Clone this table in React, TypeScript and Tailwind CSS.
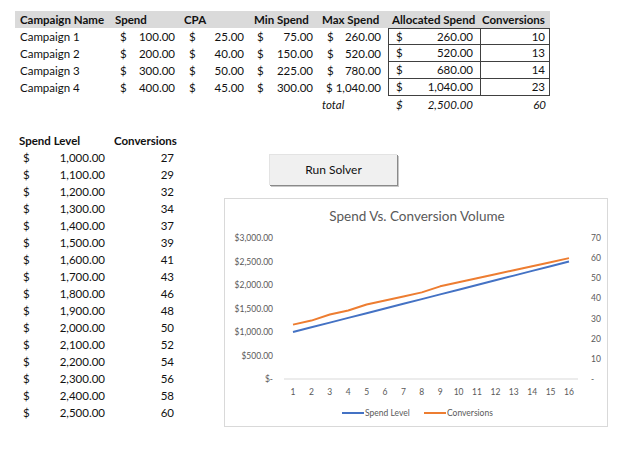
import React from "react";

type Campaign = {
  name: string;
  spend: string;
  cpa: string;
  min: string;
  max: string;
  alloc: string;
  conv: number;
};

const CAMPAIGNS: Campaign[] = [
  { name: "Campaign 1", spend: "100.00", cpa: "25.00", min: "75.00", max: "260.00", alloc: "260.00", conv: 10 },
  { name: "Campaign 2", spend: "200.00", cpa: "40.00", min: "150.00", max: "520.00", alloc: "520.00", conv: 13 },
  { name: "Campaign 3", spend: "300.00", cpa: "50.00", min: "225.00", max: "780.00", alloc: "680.00", conv: 14 },
  { name: "Campaign 4", spend: "400.00", cpa: "45.00", min: "300.00", max: "1,040.00", alloc: "1,040.00", conv: 23 },
];

const LEVELS = [
  [1000, 27], [1100, 29], [1200, 32], [1300, 34], [1400, 37], [1500, 39], [1600, 41], [1700, 43],
  [1800, 46], [1900, 48], [2000, 50], [2100, 52], [2200, 54], [2300, 56], [2400, 58], [2500, 60],
];

const fmt = (n: number) => n.toLocaleString("en-US", { minimumFractionDigits: 2 });

// accounting cell: "$" on the left, value on the right
function Money({ value, pl, pr }: { value: string; pl: string; pr: string }) {
  return (
    <div className={`flex justify-between h-[17px] items-center ${pl} ${pr}`}>
      <span>$</span>
      <span>{value}</span>
    </div>
  );
}

function Chart() {
  const x = (i: number) => 68 + i * 18.4;
  const ySpend = (v: number) => 180 - (v / 3000) * 141;
  const yConv = (v: number) => 180 - (v / 70) * 141;
  const spendPts = LEVELS.map(([s], i) => `${x(i)},${ySpend(s)}`).join(" ");
  const convPts = LEVELS.map(([, c], i) => `${x(i)},${yConv(c)}`).join(" ");
  const leftLabels = ["$3,000.00", "$2,500.00", "$2,000.00", "$1,500.00", "$1,000.00", "$500.00", "$-"];
  const rightLabels = ["70", "60", "50", "40", "30", "20", "10", "-"];

  return (
    <div className="w-[384px] h-[229px] border border-[#d9d9d9] bg-white">
      <svg width="382" height="227" viewBox="0 0 382 227" className="block" fontFamily="Lato, 'Open Sans', sans-serif">
        <text x="192" y="22" textAnchor="middle" fontSize="13.5" fill="#595959">
          Spend Vs. Conversion Volume
        </text>
        {leftLabels.map((l, i) => (
          <text key={l} x="48" y={39 + i * 23.5 + 3} textAnchor="end" fontSize="8.5" fill="#595959">
            {l}
          </text>
        ))}
        {rightLabels.map((l, i) => (
          <text key={l} x="366" y={39 + i * 20.14 + 3} fontSize="8.5" fill="#595959">
            {l}
          </text>
        ))}
        <line x1="59" y1="180" x2="353" y2="180" stroke="#d9d9d9" strokeWidth="1" />
        {LEVELS.map((_, i) => (
          <text key={i} x={x(i)} y="196" textAnchor="middle" fontSize="8.5" fill="#595959">
            {i + 1}
          </text>
        ))}
        <polyline points={spendPts} fill="none" stroke="#4472c4" strokeWidth="2" strokeLinejoin="round" />
        <polyline points={convPts} fill="none" stroke="#ed7d31" strokeWidth="2" strokeLinejoin="round" />
        <line x1="117" y1="214" x2="139" y2="214" stroke="#4472c4" strokeWidth="2" />
        <text x="140" y="217" fontSize="8.5" fill="#595959">Spend Level</text>
        <line x1="199" y1="214" x2="221" y2="214" stroke="#ed7d31" strokeWidth="2" />
        <text x="222" y="217" fontSize="8.5" fill="#595959">Conversions</text>
      </svg>
    </div>
  );
}

export default function App() {
  return (
    <main className="w-[628px] h-[460px] bg-white text-[11.5px] text-[#111] font-['Lato','Open_Sans',sans-serif] leading-none whitespace-nowrap overflow-hidden">
      {/* campaign table */}
      <div className="pt-[11px] pl-[15px]">
        <div className="grid grid-cols-[98px_68px_69px_69px_69px_92px_70px] w-[535px]">
          <div className="contents font-bold">
            <div className="h-[17px] flex items-center bg-[#dadada] pl-[5px]">Campaign Name</div>
            <div className="h-[17px] flex items-center bg-[#dadada] pl-[2px]">Spend</div>
            <div className="h-[17px] flex items-center bg-[#dadada] pl-[3px]">CPA</div>
            <div className="h-[17px] flex items-center bg-[#dadada] pl-[4px]">Min Spend</div>
            <div className="h-[17px] flex items-center bg-[#dadada] pl-[3px]">Max Spend</div>
            <div className="h-[17px] flex items-center bg-[#dadada] pl-[4px]">Allocated Spend</div>
            <div className="h-[17px] flex items-center bg-[#dadada] pl-[2px]">Conversions</div>
          </div>
          {CAMPAIGNS.map((c, r) => (
            <div key={c.name} className="contents">
              <div className="h-[17px] flex items-center pl-[5px]">{c.name}</div>
              <Money value={c.spend} pl="pl-[7px]" pr="pr-[6px]" />
              <Money value={c.cpa} pl="pl-[8px]" pr="pr-[6px]" />
              <Money value={c.min} pl="pl-[7px]" pr="pr-[6px]" />
              {c.max.length > 6 ? (
                <div className="h-[17px] flex items-center justify-end pr-[7px]">$ {c.max}</div>
              ) : (
                <Money value={c.max} pl="pl-[8px]" pr="pr-[7px]" />
              )}
              <div
                className={`h-[17px] flex justify-between items-center pl-[7px] pr-[7px] border-l border-b border-[#404040] ${
                  r === 0 ? "border-t" : ""
                }`}
              >
                <span>$</span>
                <span>{c.alloc}</span>
              </div>
              <div
                className={`h-[17px] flex items-center justify-end pr-[4px] border-l border-r border-b border-[#404040] ${
                  r === 0 ? "border-t" : ""
                }`}
              >
                {c.conv}
              </div>
            </div>
          ))}
          <div className="contents italic">
            <div className="h-[17px]" />
            <div className="h-[17px]" />
            <div className="h-[17px]" />
            <div className="h-[17px]" />
            <div className="h-[17px] flex items-center pl-[3px]">total</div>
            <div className="h-[17px] flex justify-between items-center pl-[8px] pr-[7px]">
              <span>$</span>
              <span>2,500.00</span>
            </div>
            <div className="h-[17px] flex items-center justify-end pr-[4px]">60</div>
          </div>
        </div>
      </div>

      <div className="flex items-start">
        {/* spend level table */}
        <div className="ml-[15px] mt-[19px] grid grid-cols-[96px_68px] w-[164px]">
          <div className="h-[17px] flex items-center font-bold pl-[4px]">Spend Level</div>
          <div className="h-[17px] flex items-center font-bold pl-[3px]">Conversions</div>
          {LEVELS.map(([s, c]) => (
            <div key={s} className="contents">
              <div className="h-[17px] flex items-center justify-between pl-[8px] pr-[6px]">
                <span>$</span>
                <span>{fmt(s)}</span>
              </div>
              <div className="h-[17px] flex items-center justify-end pr-[5px]">{c}</div>
            </div>
          ))}
        </div>

        {/* solver button + chart */}
        <div className="ml-[45px] mt-[41px] flex flex-col">
          <button className="ml-[45px] w-[128px] h-[31px] bg-[#f0f0f0] border-t border-l border-[#e3e3e3] shadow-[1px_1px_0_#8a8a8a,2px_2px_0_#c8c8c8] text-[12px] text-[#111]">
            Run Solver
          </button>
          <div className="mt-[13px]">
            <Chart />
          </div>
        </div>
      </div>
    </main>
  );
}
